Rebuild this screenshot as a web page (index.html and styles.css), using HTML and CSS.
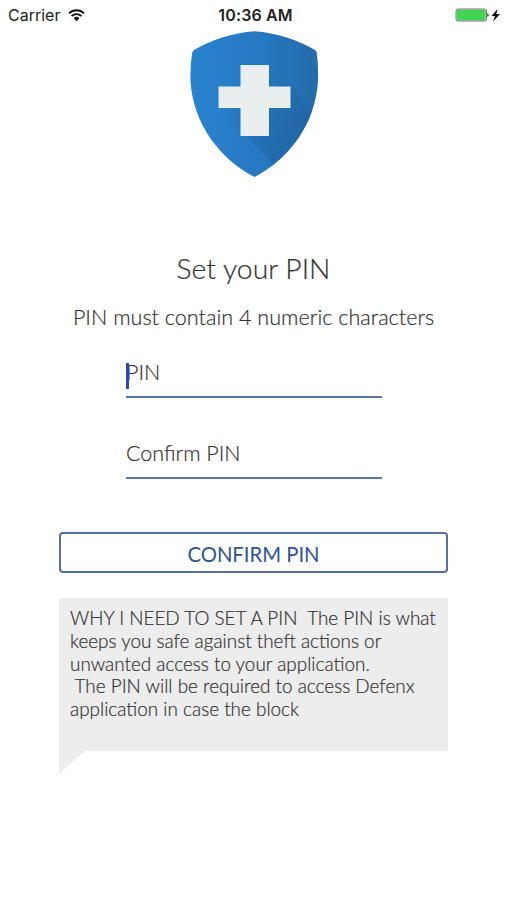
FILE: index.html
```html
<!DOCTYPE html>
<html lang="en"><head><meta charset="utf-8"><title>Set your PIN</title><link rel="stylesheet" href="styles.css"></head>
<body>
<header class="status">
<div class="left"><span>Carrier</span><svg width="17" height="13" viewBox="0 0 17 13"><path d="M1 4.400a10.600 10.600 0 0 1 15 0M3.600 7.100a7 7 0 0 1 9.800 0" fill="none" stroke="#111" stroke-width="1.900"/><path d="M5.600 9.200a4.100 4.100 0 0 1 5.800 0L8.500 12.200z" fill="#111"/></svg></div>
<div class="time">10:36 AM</div>
<div class="right"><svg width="46" height="14" viewBox="0 0 46 14"><rect x="1" y="1" width="30.500" height="12" rx="2" fill="#b9e5bc" stroke="#777"/><rect x="2" y="2" width="28.500" height="10" rx="1" fill="#43d551"/><path d="M32.300 5q3 2 0 4z" fill="#333"/><path d="M42.500 1l-6 7h3.400l-1.800 5.500 7-7.500h-3.700z" fill="#111"/></svg></div>
</header>
<main>
<svg class="shield" width="130" height="148" viewBox="0 0 130 148"><defs><clipPath id="s"><path d="M65.500 1.200C87 2.500 110 10.500 126 20Q127.500 21 127.800 23Q129.500 35 129 51C126.500 94 100 129 65.500 147C31 129 4 94 1.500 51Q1 35 3.200 23Q3.500 21 5 20C21 10.500 44 2.500 65.500 1.200Z"/></clipPath><linearGradient id="g" x1="0" y1="0" x2="1" y2="0"><stop offset="0" stop-color="#2a83d0"/><stop offset=".6" stop-color="#2577bf"/><stop offset="1" stop-color="#246baa"/></linearGradient><linearGradient id="h" gradientUnits="userSpaceOnUse" x1="35" y1="80" x2="78" y2="124"><stop offset="0" stop-color="#1f5e9d" stop-opacity="0"/><stop offset="1" stop-color="#1f5e9d" stop-opacity=".45"/></linearGradient></defs><g clip-path="url(#s)"><path d="M0 0h130v148H0z" fill="url(#g)"/><path d="M79 35L145 101V150H100L29 78z" fill="url(#h)"/></g><path d="M51.500 35h28.500v21.500h21.500V78H80v28H51.500V78H29.500V56.500h22z" fill="#e8efee"/></svg>
<h1>Set your PIN</h1><p class="sub">PIN must contain 4 numeric characters</p>
<div class="field first"><i class="caret"></i><span>PIN</span></div>
<div class="field second"><span>Confirm PIN</span></div>
<button>CONFIRM PIN</button>
<div class="note">WHY I NEED TO SET A PIN&nbsp; The PIN is what<br>keeps you safe against theft actions or<br>unwanted access to your application.<br>&nbsp;The PIN will be required to access Defenx<br>application in case the block</div>
<div class="tail"></div>
</main></body></html>
```
FILE: styles.css
```css
*{box-sizing:border-box}
body{margin:0;background:#fff;color:#333;font-family:Lato,sans-serif;height:900px;overflow:hidden}
.status{height:30px;display:grid;grid-template-columns:1fr 90px 1fr;align-items:center;padding:0 6px 0 8px;font:16px/30px Inter,sans-serif;color:#222}
.left{display:flex;align-items:center;gap:8px}
.time{font-weight:600;text-align:center;white-space:nowrap;padding-left:2px;letter-spacing:.15px}
.right{display:flex;justify-content:flex-end}
main{display:flex;flex-direction:column;align-items:center}
.shield{display:block}
h1,.sub,.field,.note{-webkit-text-stroke:.2px #333}
h1{font-size:28.300px;line-height:36px;font-weight:300;margin:72px 0 0}
.sub{font-size:21.600px;line-height:28px;font-weight:300;margin:17px 0 0;white-space:nowrap}
.field{width:256px;height:42px;margin-left:1px;border-bottom:2px solid #5a75aa;font-size:21.500px;line-height:32px;font-weight:300;position:relative}
.first{margin-top:25px}
.second{margin-top:39px}
.caret{position:absolute;left:0;top:7px;width:3px;height:26px;background:#3547b0}
button{width:389px;height:41px;margin-top:53px;border:2px solid #536fa3;border-radius:4px;background:#fff;color:#2c5595;font:400 20.300px/36px Lato,sans-serif;padding:2px 0 0}
.note{width:389px;height:153px;margin-top:25px;background:#ededed;padding:9px 11px;font-size:18.900px;line-height:22.800px;white-space:nowrap;font-weight:300}
.tail{width:389px;height:23px;background:#ededed;clip-path:polygon(0 0,26px 0,0 23px)}
```
